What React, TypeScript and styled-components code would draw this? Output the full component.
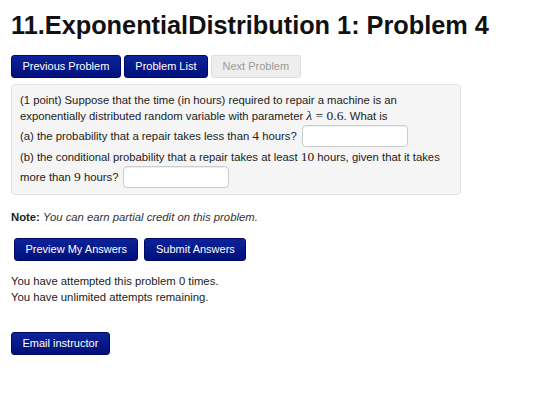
import { FC } from 'react';
import styled, { createGlobalStyle, css } from 'styled-components';

const GlobalStyle = createGlobalStyle`
  html, body {
    margin: 0;
    padding: 0;
    background: #ffffff;
  }
  body {
    font-family: "Liberation Sans", Arial, Helvetica, sans-serif;
    font-size: 11.3px;
    color: #222222;
  }
`;

const App: FC = () => (
  <>
    <GlobalStyle />
    <SPage>
      <STitle>11.ExponentialDistribution 1: Problem 4</STitle>

      <SNav>
        <SButton>Previous Problem</SButton>
        <SButton>Problem List</SButton>
        <SButton disabled>Next Problem</SButton>
      </SNav>

      <SProblemBox>
        <SIntro>
          (1 point) Suppose that the time (in hours) required to repair a
          machine is an
          <br />
          exponentially distributed random variable with parameter{' '}
          <SMath>
            <i>λ</i> = 0.6
          </SMath>
          . What is
        </SIntro>
        <SAnswerRow>
          (a) the probability that a repair takes less than <SMath>4</SMath>
          &nbsp;hours?
          <SAnswerInput type="text" />
        </SAnswerRow>
        <SQuestionLine>
          (b) the conditional probability that a repair takes at least{' '}
          <SMath>10</SMath> hours, given that it takes
        </SQuestionLine>
        <SAnswerRow>
          more than <SMath>9</SMath>&nbsp;hours?
          <SAnswerInput type="text" />
        </SAnswerRow>
      </SProblemBox>

      <SNote>
        <b>Note:</b> <i>You can earn partial credit on this problem.</i>
      </SNote>

      <SSubmitRow>
        <SButton>Preview My Answers</SButton>
        <SButton>Submit Answers</SButton>
      </SSubmitRow>

      <SAttempts>
        You have attempted this problem 0 times.
        <br />
        You have unlimited attempts remaining.
      </SAttempts>

      <SEmailRow>
        <SButton>Email instructor</SButton>
      </SEmailRow>
    </SPage>
  </>
);

export default App;

const SPage = styled.main`
  padding: 11px 11px 20px;
`;

const STitle = styled.h1`
  margin: 0;
  font-size: 25.3px;
  line-height: 28px;
  font-weight: bold;
  color: #111111;
`;

const SNav = styled.nav`
  display: flex;
  gap: 3px;
  margin-top: 16px;
`;

const SButton = styled.button`
  height: 23px;
  padding: 0 10.5px;
  border-radius: 3px;
  font-family: inherit;
  font-size: 11px;
  line-height: 21px;
  cursor: pointer;
  color: #ffffff;
  border: 1px solid #000a66;
  background: linear-gradient(to bottom, #0d2399, #00107c);

  ${({ disabled }) =>
    disabled &&
    css`
      color: #9a9a9a;
      border-color: #dddddd;
      background: #eeeeee;
      cursor: default;
    `}
`;

const SProblemBox = styled.section`
  margin-top: 6px;
  width: 450px;
  box-sizing: border-box;
  padding: 7px 8px 6px;
  background: #f5f5f5;
  border: 1px solid #e3e3e3;
  border-radius: 4px;
`;

const SIntro = styled.p`
  margin: 0;
  line-height: 16px;
`;

const SQuestionLine = styled.div`
  margin-top: 2px;
  line-height: 16px;
  white-space: nowrap;
`;

const SAnswerRow = styled.div`
  display: flex;
  align-items: center;
  height: 23px;
  white-space: pre;
`;

const SMath = styled.span`
  font-family: "Liberation Serif", "DejaVu Serif", serif;
  font-size: 13.5px;
  white-space: nowrap;

  i {
    font-style: italic;
  }
`;

const SAnswerInput = styled.input`
  width: 106px;
  height: 22px;
  box-sizing: border-box;
  margin: 0 0 0 5px;
  padding: 2px 4px;
  background: #ffffff;
  border: 1px solid #cccccc;
  border-radius: 4px;
  box-shadow: inset 0 1px 1px rgba(0, 0, 0, 0.075);
`;

const SNote = styled.p`
  margin: 14px 0 0;
  line-height: 16px;

  i {
    color: #333333;
  }
`;

const SSubmitRow = styled.div`
  display: flex;
  gap: 6px;
  margin: 13px 0 0 3px;
`;

const SAttempts = styled.p`
  margin: 12px 0 0;
  line-height: 16px;
`;

const SEmailRow = styled.div`
  margin-top: 27px;
`;
